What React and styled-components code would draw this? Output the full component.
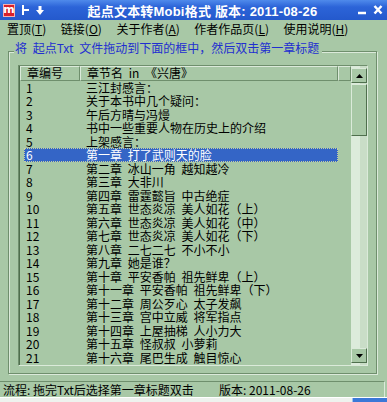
import React from 'react';
import styled, { createGlobalStyle } from 'styled-components';

const GlobalStyle = createGlobalStyle`
  html, body {
    margin: 0;
    padding: 0;
    background: #a8c8a6;
  }
  body {
    font-family: "Noto Sans CJK SC", "DejaVu Sans", sans-serif;
    font-size: 12px;
    color: #000;
    word-spacing: 3px;
  }
`;

const BG = '#a8c8a6';
const DARK = '#6f8f6d';
const LIGHT = '#dbeada';

const Window = styled.div`
  width: 387px;
  height: 402px;
  display: flex;
  flex-direction: column;
  background: ${BG};
  overflow: hidden;
`;

const TitleBar = styled.div`
  height: 20px;
  flex: none;
  display: flex;
  align-items: center;
  padding: 0 4px 0 3px;
  background: linear-gradient(180deg, #4f8aeb 0%, #2c64d8 35%, #2459cc 100%);
  color: #fff;
  word-spacing: 0;
`;

const AppIcon = styled.div`
  width: 12px;
  height: 13px;
  background: #d8202a;
  border: 1px solid #f4b0b0;
  box-sizing: border-box;
  display: flex;
  align-items: center;
  justify-content: center;
  font: bold 11px "DejaVu Sans", sans-serif;
  line-height: 1;
  padding-bottom: 2px;
`;

const TitleTool = styled.svg`
  margin-left: ${(p) => p.gap}px;
  flex: none;
`;

const Title = styled.div`
  flex: 1;
  text-align: center;
  font: bold 13px "Liberation Sans", "Noto Sans CJK SC", sans-serif;
  letter-spacing: 0.2px;
  padding-left: 4px;
  white-space: nowrap;
`;

const CaptionBtn = styled.svg`
  margin-left: ${(p) => p.gap}px;
  flex: none;
`;

const MenuBar = styled.div`
  height: 18px;
  flex: none;
  display: flex;
  align-items: center;
  gap: 14.5px;
  padding-left: 7px;
  line-height: 18px;
`;

const MenuItem = styled.span`
  white-space: nowrap;
  u {
    text-decoration: underline;
    text-underline-offset: 1px;
  }
`;

const Group = styled.fieldset`
  margin: 3px 10px 0 8px;
  padding: 3px 8px 7px 9px;
  border: 1px solid ${DARK};
  box-shadow: inset 1px 1px 0 ${LIGHT}, 1px 1px 0 ${LIGHT};
  min-width: 0;
  flex: none;
`;

const Legend = styled.legend`
  margin-left: -4px;
  padding: 0 3px 7px 1px;
  line-height: 14px;
  color: #1f2fd0;
  background: ${BG};
  white-space: nowrap;
`;

const ListBox = styled.div`
  height: 299px;
  display: flex;
  border: 1px solid;
  border-color: ${DARK} ${LIGHT} ${LIGHT} ${DARK};
  box-shadow: inset 1px 1px 0 #4f6f4d;
  overflow: hidden;
`;

const Columns = styled.div`
  flex: 1;
  display: flex;
  flex-direction: column;
  padding-left: 1px;
  overflow: hidden;
`;

const Header = styled.div`
  height: 14.5px;
  display: flex;
  flex: none;
`;

const HeadCell = styled.div`
  width: ${(p) => p.w}px;
  flex: ${(p) => (p.w ? 'none' : '1')};
  box-sizing: border-box;
  padding-left: 6px;
  line-height: 12.5px;
  border: 1px solid;
  border-color: ${LIGHT} ${DARK} ${DARK} ${LIGHT};
  white-space: nowrap;
`;

const Row = styled.div`
  width: 314px;
  height: 13.5px;
  margin-left: 4px;
  display: flex;
  flex: none;
  line-height: 13.5px;
  box-sizing: border-box;
  background: ${(p) => (p.selected ? '#3465c6' : 'transparent')};
  color: ${(p) => (p.selected ? '#fff' : '#000')};
  outline: ${(p) => (p.selected ? '1px dotted #c8d0a0' : 'none')};
  outline-offset: -1px;
`;

const Cell = styled.div`
  width: ${(p) => p.w}px;
  flex: none;
  padding-left: ${(p) => p.pad}px;
  box-sizing: border-box;
  white-space: nowrap;
`;

const ScrollBar = styled.div`
  width: 16px;
  flex: none;
  display: flex;
  flex-direction: column;
  background: linear-gradient(90deg, #dcebdb 0 55%, #c9ddc7 55% 100%);
`;

const ScrollBtn = styled.div`
  height: 15px;
  flex: none;
  display: flex;
  align-items: center;
  justify-content: center;
  box-sizing: border-box;
  background: ${BG};
  border: 1px solid;
  border-color: ${LIGHT} #4f6f4d #4f6f4d ${LIGHT};
  margin-top: ${(p) => p.mt || 0}px;
  margin-bottom: ${(p) => p.mb || 0}px;
`;

const Thumb = styled.div`
  height: 52px;
  flex: none;
  box-sizing: border-box;
  background: ${BG};
  border: 1px solid;
  border-color: ${LIGHT} #4f6f4d #4f6f4d ${LIGHT};
  margin-top: 1px;
`;

const Track = styled.div`
  flex: 1;
`;

const StatusBar = styled.div`
  height: 15px;
  flex: none;
  margin-top: 7px;
  display: flex;
  align-items: center;
  border-top: 1px solid ${DARK};
  border-right: 1px solid ${LIGHT};
  margin-right: 2px;
  padding-left: 3px;
  line-height: 15px;
  white-space: nowrap;
  word-spacing: 0;
`;

const StatusText = styled.span`
  width: ${(p) => p.w}px;
  flex: none;
`;

const BottomStrip = styled.div`
  flex: 1;
  display: flex;
  background: #eef2ee;
  border-top: 1px solid #ffffff;
`;

const TaskBlue = styled.div`
  margin-left: auto;
  width: 34px;
  background: #3b78d8;
  border-left: 1px solid #9cc0f0;
`;

const chapters = [
  '三江封感言：',
  '关于本书中几个疑问：',
  '午后方晴与冯熳',
  '书中一些重要人物在历史上的介绍',
  '上架感言：',
  '第一章 打了武则天的脸',
  '第二章 冰山一角 越知越冷',
  '第三章 大非川',
  '第四章 雷霆懿旨 中古绝症',
  '第五章 世态炎凉 美人如花（上）',
  '第六章 世态炎凉 美人如花（中）',
  '第七章 世态炎凉 美人如花（下）',
  '第八章 二七二七 不小不小',
  '第九章 她是谁？',
  '第十章 平安香帕 祖先鲜卑（上）',
  '第十一章 平安香帕 祖先鲜卑（下）',
  '第十二章 周公歹心 太子发飙',
  '第十三章 宫中立威 将军指点',
  '第十四章 上屋抽梯 人小力大',
  '第十五章 怪叔叔 小萝莉',
  '第十六章 尾巴生成 触目惊心',
  '第十七章 美女粉丝 论道读情',
];

const menus = [
  ['置顶', 'T'],
  ['链接', 'O'],
  ['关于作者', 'A'],
  ['作者作品页', 'L'],
  ['使用说明', 'H'],
];

export default function App() {
  return (
    <Window>
      <GlobalStyle />
      <TitleBar>
        <AppIcon>m</AppIcon>
        <TitleTool gap={7} width='7' height='10' viewBox='0 0 7 10'>
          <path d='M1 0v10M1 5h6' stroke='#fff' strokeWidth='2' />
        </TitleTool>
        <TitleTool gap={7} width='8' height='9' viewBox='0 0 8 9'>
          <path d='M2.5 0h3v4h2.5L4 9 0 4h2.5z' fill='#fff' />
        </TitleTool>
        <Title>起点文本转Mobi格式 版本: 2011-08-26</Title>
        <CaptionBtn gap={0} width='10' height='12' viewBox='0 0 10 12'>
          <path d='M1 9h8' stroke='#fff' strokeWidth='2.5' />
        </CaptionBtn>
        <CaptionBtn gap={6} width='10' height='12' viewBox='0 0 10 12'>
          <path d='M1.5 2l7 7.5M8.5 2l-7 7.5' stroke='#fff' strokeWidth='2.5' />
        </CaptionBtn>
      </TitleBar>

      <MenuBar>
        {menus.map(([label, key]) => (
          <MenuItem key={key}>
            {label}(<u>{key}</u>)
          </MenuItem>
        ))}
      </MenuBar>

      <Group>
        <Legend>将 起点Txt 文件拖动到下面的框中，然后双击第一章标题</Legend>
        <ListBox>
          <Columns>
            <Header>
              <HeadCell w={60}>章编号</HeadCell>
              <HeadCell w={258}>章节名 in 《兴唐》</HeadCell>
              <HeadCell />
            </Header>
            {chapters.map((name, i) => (
              <Row key={i} selected={i === 5}>
                <Cell w={56} pad={2}>
                  {i + 1}
                </Cell>
                <Cell w={258} pad={6}>
                  {name}
                </Cell>
              </Row>
            ))}
          </Columns>
          <ScrollBar>
            <ScrollBtn mt={2}>
              <svg width='7' height='4' viewBox='0 0 7 4'>
                <path d='M0 4L3.5 0 7 4z' fill='#000' />
              </svg>
            </ScrollBtn>
            <Thumb />
            <Track />
            <ScrollBtn mb={2}>
              <svg width='7' height='4' viewBox='0 0 7 4'>
                <path d='M0 0L3.5 4 7 0z' fill='#000' />
              </svg>
            </ScrollBtn>
          </ScrollBar>
        </ListBox>
      </Group>

      <StatusBar>
        <StatusText w={216}>流程: 拖完Txt后选择第一章标题双击</StatusText>
        <StatusText>版本: 2011-08-26</StatusText>
      </StatusBar>
      <BottomStrip>
        <TaskBlue />
      </BottomStrip>
    </Window>
  );
}
